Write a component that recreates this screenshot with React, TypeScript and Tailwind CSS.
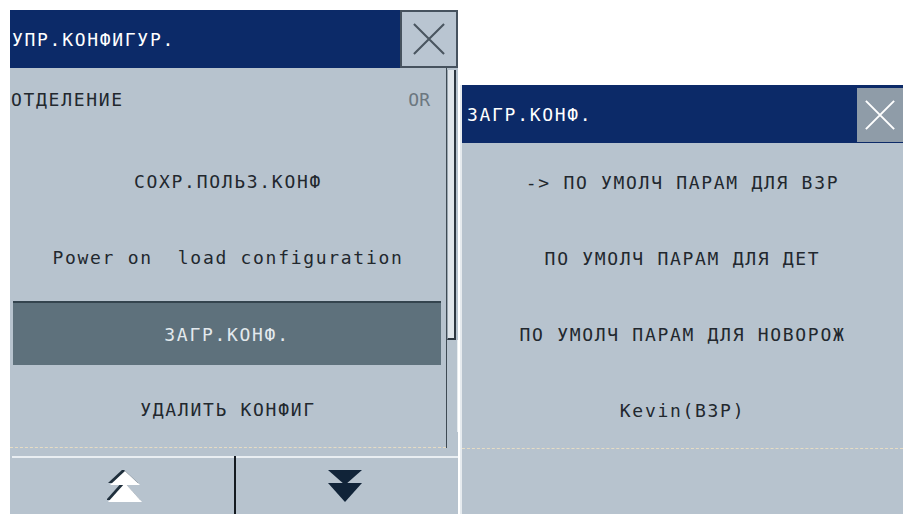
import React from "react";

const NAVY = "bg-[#0c2a68]";

function CloseIcon({ color, size }: { color: string; size: number }) {
  return (
    <svg width={size} height={size} viewBox="0 0 34 34">
      <path d="M1 1 L33 33 M33 1 L1 33" stroke={color} strokeWidth={2.2} />
    </svg>
  );
}

function UpArrows() {
  return (
    <svg width="36" height="32" viewBox="0 0 36 32">
      <g fill="#1f2f3c" transform="translate(-2,-1)">
        <polygon points="18,0 33,14 3,14" />
        <polygon points="18,12 35,31 1,31" />
      </g>
      <g fill="#ffffff">
        <polygon points="18,1 33,15 3,15" />
        <polygon points="18,13 35,32 1,32" />
      </g>
    </svg>
  );
}

function DownArrows() {
  return (
    <svg width="34" height="32" viewBox="0 0 34 32">
      <g fill="#102338">
        <polygon points="0,0 34,0 17,15" />
        <polygon points="0,13 34,13 17,32" />
      </g>
    </svg>
  );
}

function Row({ children }: { children: React.ReactNode }) {
  return (
    <div className="flex h-[76px] items-center justify-center whitespace-pre text-[#22282e]">
      {children}
    </div>
  );
}

export default function App() {
  return (
    <div className="flex h-[514px] w-[903px] overflow-hidden bg-white font-['DejaVu_Sans_Mono',monospace] text-[18px] tracking-[1.7px]">
      {/* УПР.КОНФИГУР. */}
      <div className="ml-[10px] mt-[10px] flex w-[448px] flex-col bg-[#b7c3ce]">
        <div className="flex h-[58px]">
          <div className={`flex flex-1 items-center pl-[2px] text-white ${NAVY}`}>
            УПР.КОНФИГУР.
          </div>
          <div className="flex w-[58px] items-center justify-center border-2 border-[#46525e] bg-[#b9c5d1]">
            <CloseIcon color="#4a5660" size={32} />
          </div>
        </div>

        <div className="flex h-[380px]">
          <div className="flex flex-1 flex-col border-b border-dashed border-[#e6dcc4]">
            <div className="flex h-[76px] items-center justify-between pb-[12px] pl-[1px] pr-[16px] text-[#22282e]">
              <span>ОТДЕЛЕНИЕ</span>
              <span className="tracking-normal text-[#6c7780]">OR</span>
            </div>
            <Row>СОХР.ПОЛЬЗ.КОНФ</Row>
            <Row>Power on  load configuration</Row>
            <div className="flex h-[76px] py-[6px] pl-[3px] pr-[5px]">
              <div className="flex flex-1 items-center justify-center border-t-2 border-[#34444e] bg-[#5e717c] text-[#e3e9ed]">
                ЗАГР.КОНФ.
              </div>
            </div>
            <Row>УДАЛИТЬ КОНФИГ</Row>
          </div>

          {/* scrollbar */}
          <div className="flex w-[12px] flex-col border-l border-[#3e4a54] pb-[16px]">
            <div className="mt-[2px] h-[270px] w-[9px] border-b-2 border-l border-r-2 border-b-[#2c3640] border-l-[#9aa6b0] border-r-[#2c3640] bg-[#dfe5ea]" />
            <div className="flex-1 border-r border-[#e6ebef]" />
          </div>
        </div>

        <div className="mt-[8px] flex flex-1 pl-[2px]">
          <div className="flex flex-1 items-center justify-center border-t-2 border-[#e9eef2] bg-[#b7c3ce] pl-[4px]">
            <UpArrows />
          </div>
          <div className="w-[2px] bg-[#141a20]" />
          <div className="flex flex-1 items-center justify-center border-t-2 border-[#e9eef2] bg-[#b7c3ce] pr-[4px]">
            <DownArrows />
          </div>
        </div>
      </div>

      {/* ЗАГР.КОНФ. */}
      <div className="ml-[2px] mt-[85px] flex flex-1 flex-col border-l-2 border-[#e6ebef] bg-[#b7c3ce]">
        <div className={`flex h-[58px] ${NAVY}`}>
          <div className="flex flex-1 items-center pl-[5px] text-white">ЗАГР.КОНФ.</div>
          <div className="mb-[1px] mt-[3px] flex w-[46px] items-center justify-center bg-[#8f9ca8]">
            <CloseIcon color="#ffffff" size={30} />
          </div>
        </div>
        <div className="mt-[1px] flex flex-col border-b border-dashed border-[#e6dcc4]">
          <Row>-&gt; ПО УМОЛЧ ПАРАМ ДЛЯ ВЗР</Row>
          <Row>ПО УМОЛЧ ПАРАМ ДЛЯ ДЕТ</Row>
          <Row>ПО УМОЛЧ ПАРАМ ДЛЯ НОВОРОЖ</Row>
          <Row>Kevin(ВЗР)</Row>
        </div>
      </div>
    </div>
  );
}
